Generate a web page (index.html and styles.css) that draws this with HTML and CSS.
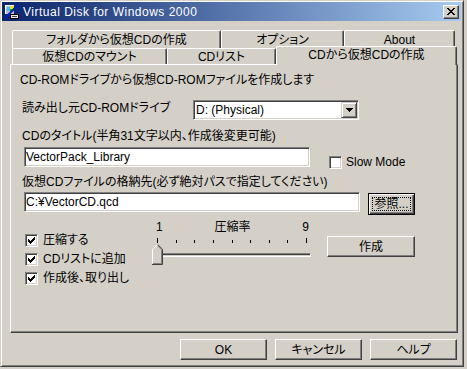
FILE: index.html
```html
<!DOCTYPE html>
<html lang="ja">
<head>
<meta charset="utf-8">
<title>Virtual Disk for Windows 2000</title>
<link rel="stylesheet" href="styles.css">
</head>
<body>
<div class="window">
  <div class="titlebar">
    <svg class="app-icon" width="16" height="16" viewBox="0 0 16 16" shape-rendering="crispEdges">
      <rect x="1" y="1" width="9" height="9" fill="#c0c0c0"/>
      <rect x="1" y="1" width="9" height="1" fill="#ffffff"/>
      <rect x="1" y="1" width="1" height="9" fill="#ffffff"/>
      <rect x="6" y="2" width="3" height="3" fill="#e8e800"/>
      <rect x="6" y="5" width="3" height="3" fill="#00b000"/>
      <rect x="3" y="3" width="3" height="4" fill="#40c0ff"/>
      <path d="M1 14 L14 1" stroke="#0020c0" stroke-width="2" shape-rendering="auto"/>
      <rect x="6.5" y="10.5" width="8" height="4" fill="#e8e8e8" stroke="#000" shape-rendering="auto"/>
      <rect x="8" y="12" width="5" height="1" fill="#404040"/>
    </svg>
    <span class="title">Virtual Disk for Windows 2000</span>
    <div class="caption-btn">
      <svg width="8" height="7" viewBox="0 0 8 7" shape-rendering="crispEdges"><path d="M0 0h2v1h-2zM6 0h2v1h-2zM1 1h2v1h-2zM5 1h2v1h-2zM2 2h4v1h-4zM3 3h2v1h-2zM2 4h4v1h-4zM1 5h2v1h-2zM5 5h2v1h-2zM0 6h2v1h-2zM6 6h2v1h-2z" fill="#000"/></svg>
    </div>
  </div>
  <div class="client">
    <div class="tabs">
      <div class="tab-row row-back">
        <div class="tab t-folder">フォルダから仮想CDの作成</div>
        <div class="tab t-option">オプション</div>
        <div class="tab t-about">About</div>
      </div>
      <div class="tab-row row-front">
        <div class="tab t-mount">仮想CDのマウント</div>
        <div class="tab t-list">CDリスト</div>
        <div class="tab t-create selected">CDから仮想CDの作成</div>
      </div>
    </div>
    <div class="panel">
      <div class="heading">CD-ROMドライブから仮想CD-ROMファイルを作成します</div>
      <div class="drive-row">
        <div class="label drive-label">読み出し元CD-ROMドライブ</div>
        <div class="combo">
          <span class="combo-text">D: (Physical)</span>
          <div class="combo-btn">
            <svg width="7" height="4" viewBox="0 0 7 4" shape-rendering="crispEdges"><path d="M0 0h7v1h-7zM1 1h5v1h-5zM2 2h3v1h-3zM3 3h1v1h-1z" fill="#000"/></svg>
          </div>
        </div>
      </div>
      <div class="label title-label">CDのタイトル(半角31文字以内、作成後変更可能)</div>
      <div class="title-row">
        <div class="field title-field">VectorPack_Library</div>
        <div class="check slow"><span class="box"></span><span class="check-text">Slow Mode</span></div>
      </div>
      <div class="label path-label">仮想CDファイルの格納先(必ず絶対パスで指定してください)</div>
      <div class="path-row">
        <div class="field path-field">C:¥VectorCD.qcd</div>
        <div class="btn default browse-btn"><span class="focus">参照...</span></div>
      </div>
      <div class="lower">
        <div class="checks">
          <div class="check"><span class="box checked"><svg width="7" height="7" viewBox="0 0 7 7" shape-rendering="crispEdges"><path d="M6 0h1v1h-1zM5 1h2v1h-2zM0 2h1v1h-1zM4 2h3v1h-3zM0 3h2v1h-2zM3 3h3v1h-3zM0 4h5v1h-5zM1 5h3v1h-3zM2 6h1v1h-1z" fill="#000"/></svg></span><span class="check-text">圧縮する</span></div>
          <div class="check"><span class="box checked"><svg width="7" height="7" viewBox="0 0 7 7" shape-rendering="crispEdges"><path d="M6 0h1v1h-1zM5 1h2v1h-2zM0 2h1v1h-1zM4 2h3v1h-3zM0 3h2v1h-2zM3 3h3v1h-3zM0 4h5v1h-5zM1 5h3v1h-3zM2 6h1v1h-1z" fill="#000"/></svg></span><span class="check-text">CDリストに追加</span></div>
          <div class="check"><span class="box checked"><svg width="7" height="7" viewBox="0 0 7 7" shape-rendering="crispEdges"><path d="M6 0h1v1h-1zM5 1h2v1h-2zM0 2h1v1h-1zM4 2h3v1h-3zM0 3h2v1h-2zM3 3h3v1h-3zM0 4h5v1h-5zM1 5h3v1h-3zM2 6h1v1h-1z" fill="#000"/></svg></span><span class="check-text">作成後、取り出し</span></div>
        </div>
        <div class="slider">
          <div class="slider-labels"><span>1</span><span>圧縮率</span><span>9</span></div>
          <div class="ticks">
            <span class="tick end"></span><span class="tick"></span><span class="tick"></span><span class="tick"></span><span class="tick"></span><span class="tick"></span><span class="tick"></span><span class="tick"></span><span class="tick end"></span>
          </div>
          <div class="track-area">
            <div class="track"></div>
            <svg class="thumb" width="11" height="21" viewBox="0 0 11 21">
              <polygon points="0,5 5,0 6,0 11,5 11,21 0,21" fill="#d4d0c8"/>
              <path d="M0.5 20 V5.3 L5.3 0.5" fill="none" stroke="#fff"/>
              <path d="M5.7 0.5 L10.5 5.3 V20.5 H0" fill="none" stroke="#404040"/>
              <path d="M5.7 1.9 L9.5 5.7 V19.5 H1" fill="none" stroke="#808080"/>
            </svg>
          </div>
        </div>
        <div class="btn create-btn">作成</div>
      </div>
    </div>
    <div class="actions">
      <div class="btn action">OK</div>
      <div class="btn action">キャンセル</div>
      <div class="btn action">ヘルプ</div>
    </div>
  </div>
</div>
</body>
</html>
```

FILE: styles.css
```css
* { box-sizing: border-box; margin: 0; padding: 0; }
html, body { width: 467px; height: 369px; overflow: hidden; }
body {
  background: #d4d0c8;
  font-family: "Liberation Sans", "Noto Sans CJK JP", sans-serif;
  font-size: 12px;
  line-height: 16px;
  color: #000;
  font-feature-settings: "palt";
}

.window {
  width: 464px;
  height: 367px;
  border: 1px solid;
  border-color: #d4d0c8 #404040 #404040 #d4d0c8;
  box-shadow: inset 1px 1px #fff, inset -1px -1px #808080;
  padding: 1px 2px 2px 1px;
  display: flex;
  flex-direction: column;
}

.titlebar {
  flex: none;
  height: 19px;
  display: flex;
  align-items: center;
  padding: 0 2px;
  background: linear-gradient(to right, #0a246a, #a6caf0);
  color: #fff;
}
.app-icon { flex: none; display: block; }
.title { margin-left: 3px; white-space: nowrap; font-size: 12px; letter-spacing: 0.5px; }
.caption-btn {
  margin-left: auto;
  width: 16px;
  height: 14px;
  display: flex;
  align-items: center;
  justify-content: center;
  background: #d4d0c8;
  border: 1px solid;
  border-color: #fff #404040 #404040 #fff;
  box-shadow: inset -1px -1px #808080;
}
.caption-btn svg { display: block; }

.client {
  flex: 1;
  display: flex;
  flex-direction: column;
  padding: 9px 3px 0 8px;
}

.tabs { flex: none; padding-left: 2px; }
.tab-row { display: flex; align-items: flex-start; }
.row-back { height: 18px; }
.row-front { height: 16px; }
.tab {
  flex: none;
  height: 100%;
  display: flex;
  align-items: center;
  justify-content: center;
  white-space: nowrap;
  background: #d4d0c8;
  border-top: 1px solid #fff;
  border-left: 1px solid #fff;
  border-right: 1px solid #404040;
  box-shadow: inset -1px 0 #808080;
  border-radius: 2px 2px 0 0;
}
.t-folder { width: 209px; }
.t-option { width: 123px; }
.t-about { width: 111px; }
.t-mount { width: 155px; }
.t-list { width: 109px; }
.t-create { width: 181px; }
.tab.selected {
  height: 19px;
  margin-top: -2px;
  padding-bottom: 3px;
  position: relative;
  z-index: 1;
}

.panel {
  flex: none;
  width: 448px;
  height: 269px;
  border: 1px solid;
  border-color: #fff #404040 #404040 #fff;
  box-shadow: inset -1px -1px #808080;
  display: flex;
  flex-direction: column;
}

.heading { margin-top: 7px; height: 16px; padding-left: 9px; white-space: nowrap; }
.label { height: 16px; padding-left: 11px; white-space: nowrap; }

.drive-row { margin-top: 12px; height: 20px; display: flex; align-items: flex-start; }
.drive-label { width: 182px; }

.combo, .field {
  height: 20px;
  background: #fff;
  border: 1px solid;
  border-color: #808080 #fff #fff #808080;
  box-shadow: inset 1px 1px #404040, inset -1px -1px #d4d0c8;
  padding: 1px;
}
.combo { width: 166px; display: flex; }
.combo-text { flex: 1; padding-left: 1px; line-height: 16px; white-space: nowrap; }
.combo-btn {
  width: 16px;
  height: 16px;
  display: flex;
  align-items: center;
  justify-content: center;
  background: #d4d0c8;
  border: 1px solid;
  border-color: #d4d0c8 #404040 #404040 #d4d0c8;
  box-shadow: inset 1px 1px #fff, inset -1px -1px #808080;
}
.combo-btn svg { display: block; }

.title-label { margin-top: 8px; }
.title-row { margin-top: 3px; height: 22px; display: flex; align-items: flex-start; padding-left: 13px; }
.field { line-height: 16px; white-space: nowrap; overflow: hidden; }
.title-field { width: 286px; }

.check { display: flex; align-items: center; height: 13px; white-space: nowrap; }
.check-text { line-height: 13px; }
.box {
  flex: none;
  width: 13px;
  height: 13px;
  margin-right: 5px;
  background: #fff;
  border: 1px solid;
  border-color: #808080 #fff #fff #808080;
  box-shadow: inset 1px 1px #404040, inset -1px -1px #d4d0c8;
  display: flex;
  align-items: center;
  justify-content: center;
}
.box svg { display: block; }
.check.slow { margin-left: 19px; margin-top: 9px; }
.check.slow .box { margin-right: 4px; }

.path-label { margin-top: 5px; }
.path-row { margin-top: 2px; height: 23px; display: flex; align-items: flex-start; padding-left: 13px; }
.path-field { width: 336px; }

.btn {
  flex: none;
  display: flex;
  align-items: center;
  justify-content: center;
  white-space: nowrap;
  background: #d4d0c8;
  border: 1px solid;
  border-color: #fff #404040 #404040 #fff;
  box-shadow: inset -1px -1px #808080;
}
.btn.default {
  border-color: #000;
  box-shadow: inset 1px 1px #fff, inset -1px -1px #404040, inset -2px -2px #808080;
  padding: 3px;
  align-items: stretch;
}
.focus {
  flex: 1;
  border: 1px dotted #000;
  display: flex;
  align-items: center;
  justify-content: center;
}
.browse-btn { margin-left: 8px; margin-top: 1px; width: 47px; height: 22px; }

.lower { margin-top: 5px; display: flex; align-items: flex-start; }
.checks { width: 141px; padding-left: 14px; margin-top: 14px; display: flex; flex-direction: column; gap: 6px; }

.slider { width: 159px; display: flex; flex-direction: column; }
.slider-labels { height: 14px; line-height: 14px; display: flex; justify-content: space-between; padding: 0 2px 0 4px; }
.ticks { margin-top: 4px; height: 5px; display: flex; justify-content: space-between; align-items: flex-end; padding: 0 4px 0 5px; }
.tick { width: 1px; height: 3px; background: #000; }
.tick.end { height: 5px; }
.track-area { margin-top: 1px; height: 22px; display: grid; }
.track {
  grid-area: 1 / 1;
  align-self: center;
  margin-left: 1px;
  height: 4px;
  border: 1px solid;
  border-color: #808080 #fff #fff #808080;
  box-shadow: inset 1px 1px #404040, inset -1px -1px #d4d0c8;
}
.thumb { grid-area: 1 / 1; align-self: start; justify-self: start; display: block; }

.create-btn { margin-left: 16px; margin-top: 16px; width: 88px; height: 21px; }

.actions { flex: none; display: flex; justify-content: flex-end; gap: 8px; margin-top: 6px; padding-right: 1px; }
.action { width: 87px; height: 21px; }
```
